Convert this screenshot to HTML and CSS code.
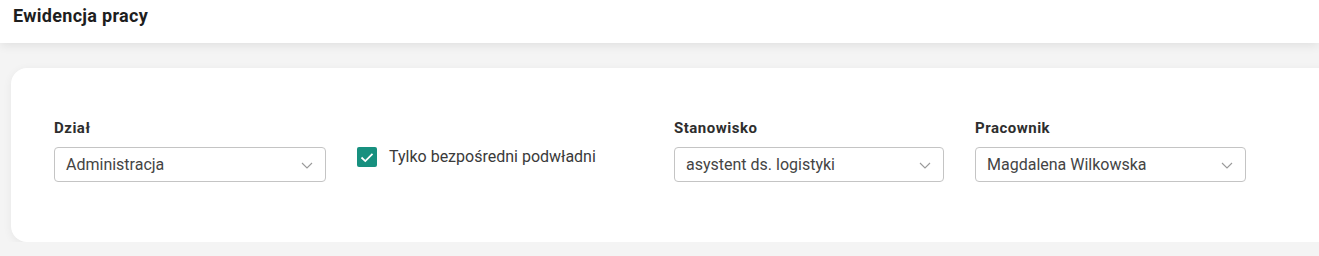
FILE: index.html
```html
<!DOCTYPE html>
<html lang="pl">
<head>
    <meta charset="UTF-8">
    <meta name="viewport" content="width=device-width, initial-scale=1.0">
    <title>Ewidencja pracy</title>
    <link rel="stylesheet" href="styles.css">
</head>
<body>
<div class="header">Ewidencja pracy</div>

<div class="content">
    <div class="card">
        <div class="filters">
            <div class="field">
                <label>Dział</label>
                <div class="select">
                    <span>Administracja</span>
                    <svg class="chevron" width="12" height="7" viewBox="0 0 12 7"><path d="M1 1l5 5 5-5" fill="none" stroke="#9a9a9a" stroke-width="1.1"/></svg>
                </div>
            </div>
            <div class="check">
                <span class="box">
                    <svg width="14" height="11" viewBox="0 0 14 11"><path d="M1.5 5.5l3.8 3.6L12.5 1.8" fill="none" stroke="#fff" stroke-width="1.8"/></svg>
                </span>
                <span>Tylko bezpośredni podwładni</span>
            </div>
            <div class="field">
                <label>Stanowisko</label>
                <div class="select">
                    <span>asystent ds. logistyki</span>
                    <svg class="chevron" width="12" height="7" viewBox="0 0 12 7"><path d="M1 1l5 5 5-5" fill="none" stroke="#9a9a9a" stroke-width="1.1"/></svg>
                </div>
            </div>
            <div class="field">
                <label>Pracownik</label>
                <div class="select">
                    <span>Magdalena Wilkowska</span>
                    <svg class="chevron" width="12" height="7" viewBox="0 0 12 7"><path d="M1 1l5 5 5-5" fill="none" stroke="#9a9a9a" stroke-width="1.1"/></svg>
                </div>
            </div>
        </div>
    </div>
</div>
</body>
</html>
```
FILE: styles.css
```css
body {
    font-family: Roboto, "Liberation Sans", Arial, sans-serif;
    margin: 0;
    background-color: #f4f4f4;
    overflow: hidden;
}
.header {
    height: 43px;
    box-sizing: border-box;
    padding: 5px 13px 0;
    background: #fff;
    color: #1e1e1e;
    font-size: 18px;
    font-weight: bold;
    letter-spacing: 0.3px;
    line-height: 22px;
    box-shadow: 0 2px 10px rgba(0, 0, 0, 0.09);
    position: relative;
}
.content {
    padding: 25px 0 0 11px;
}
.card {
    height: 174px;
    box-sizing: border-box;
    margin-right: -30px;
    padding: 51px 0 0 43px;
    background: #fff;
    border-radius: 16px;
    box-shadow: 0 2px 10px rgba(0, 0, 0, 0.06);
}
.filters {
    display: grid;
    grid-template-columns: 272px 286px 270px 271px;
    column-gap: 31px;
}
.field label {
    display: block;
    font-size: 15px;
    font-weight: bold;
    letter-spacing: 0.5px;
    color: #2e2e2e;
    line-height: 18px;
    margin-bottom: 10px;
}
.select {
    height: 35px;
    box-sizing: border-box;
    border: 1px solid #c4c4c4;
    border-radius: 4px;
    padding: 0 12px 0 11px;
    display: flex;
    align-items: center;
    justify-content: space-between;
    font-size: 16px;
    color: #444;
}
.chevron {
    margin-top: 2px;
}
.check {
    padding-top: 28px;
    display: flex;
    align-items: flex-start;
    gap: 12px;
    font-size: 16px;
    color: #3a3a3a;
    line-height: 20px;
}
.box {
    width: 20px;
    height: 20px;
    border-radius: 2px;
    background: #17907f;
    display: flex;
    align-items: center;
    justify-content: center;
}
```
